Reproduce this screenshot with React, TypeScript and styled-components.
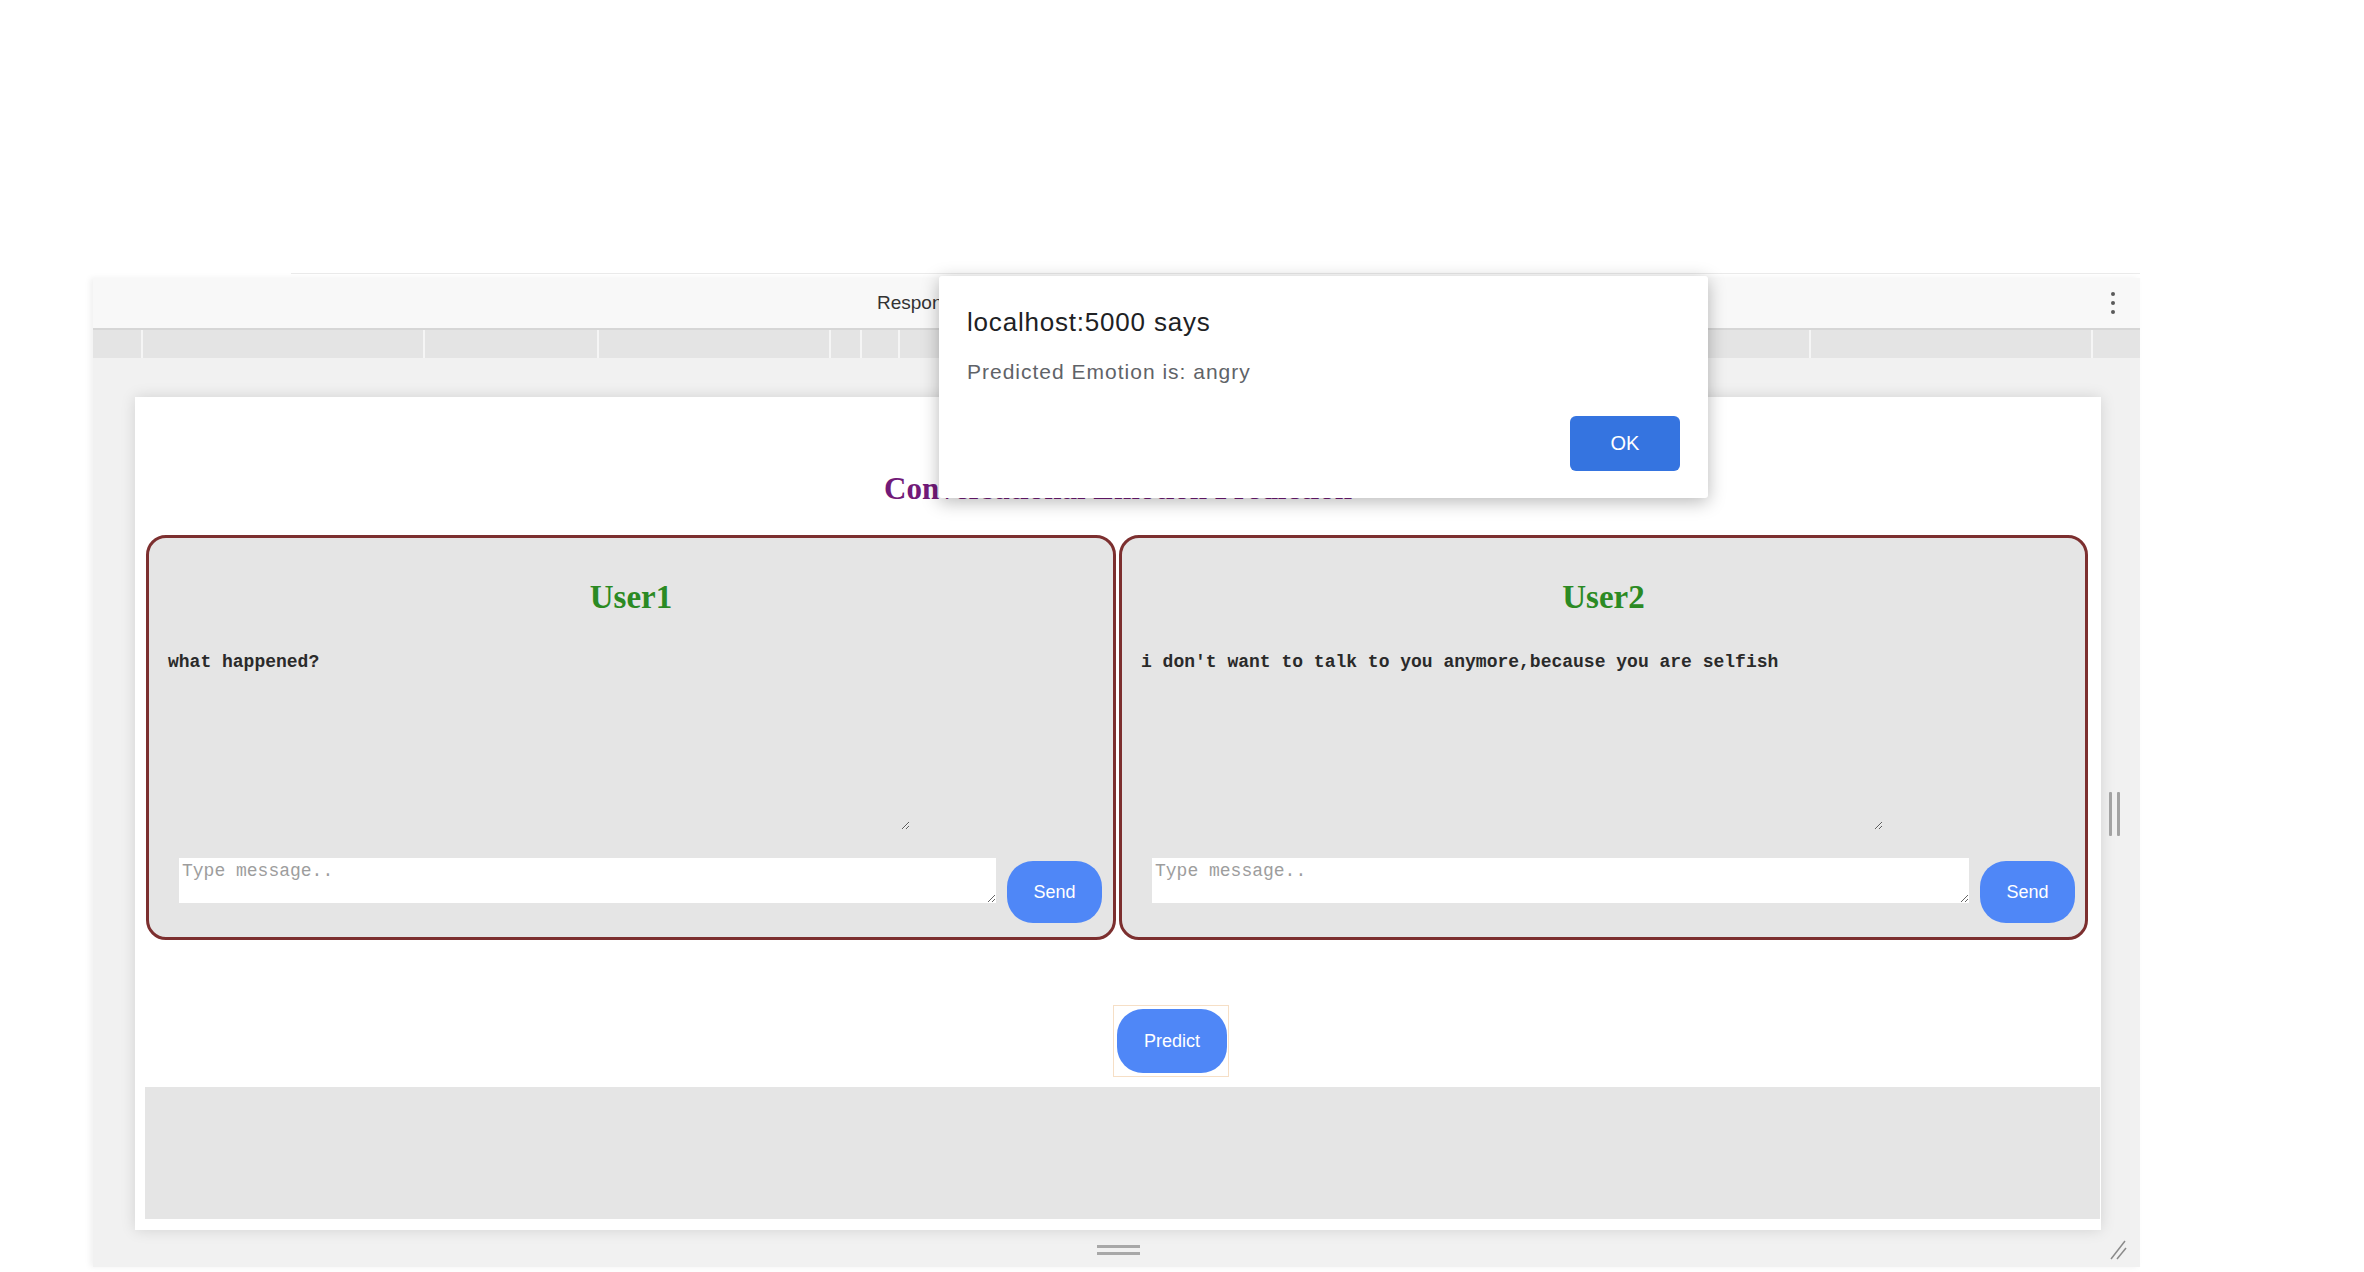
import React from "react";
import styled, { createGlobalStyle } from "styled-components";

const Global = createGlobalStyle`
  html, body { margin: 0; padding: 0; background: #ffffff; }
  body { width: 2364px; height: 1272px; overflow: hidden; font-family: "Liberation Sans", Arial, sans-serif; }
  * { box-sizing: border-box; }
`;

const Screen = styled.div`
  position: relative;
  width: 2364px;
  height: 1272px;
  background: #ffffff;
  display: flex;
  flex-direction: column;
`;

const TopRule = styled.div`
  margin: 273px 0 4px 291px;
  width: 1849px;
  height: 1px;
  background: #ebebeb;
`;

const DevTools = styled.div`
  margin-left: 93px;
  width: 2047px;
  height: 989px;
  display: flex;
  flex-direction: column;
  box-shadow: -3px 0 6px rgba(0, 0, 0, 0.06);
`;

const Toolbar = styled.div`
  height: 52px;
  background: #f8f8f8;
  border-bottom: 2px solid #d6d6d6;
  display: flex;
  align-items: center;
  justify-content: space-between;
  padding: 0 24px 0 784px;
`;

const ToolbarLabel = styled.span`
  font-family: "Liberation Sans", Arial, sans-serif;
  font-size: 19px;
  color: #333333;
`;

const Ruler = styled.div`
  height: 28px;
  background: #e4e4e4;
  display: flex;
`;

const RulerSegment = styled.div<{ $w: number; $last?: boolean }>`
  width: ${(p) => p.$w}px;
  height: 100%;
  border-right: ${(p) => (p.$last ? "none" : "2px solid #f5f5f5")};
`;

const Viewport = styled.div`
  flex: 1;
  background: #f1f1f1;
  display: flex;
  flex-direction: column;
  padding-top: 39px;
`;

const PageRow = styled.div`
  display: flex;
  padding-left: 42px;
`;

const Page = styled.div`
  width: 1966px;
  height: 833px;
  background: #ffffff;
  box-shadow: 0 0 14px rgba(0, 0, 0, 0.13);
  display: flex;
  flex-direction: column;
`;

const SideStrip = styled.div`
  width: 39px;
  display: flex;
  align-items: center;
  padding-left: 8px;
  gap: 5px;
`;

const VBar = styled.div`
  width: 3px;
  height: 44px;
  border-radius: 1px;
  background: #a3a3a3;
`;

const BottomRow = styled.div`
  display: flex;
  padding-left: 42px;
  height: 37px;
`;

const BottomStrip = styled.div`
  width: 1966px;
  display: flex;
  flex-direction: column;
  align-items: center;
  justify-content: center;
  gap: 4px;
  padding-top: 3px;
`;

const HBar = styled.div`
  width: 43px;
  height: 3px;
  background: #a8a8a8;
`;

const Corner = styled.div`
  width: 39px;
  display: flex;
  align-items: center;
  padding-left: 6px;
`;

const Heading = styled.h1`
  margin: 74px 0 28px;
  font-family: "Liberation Serif", "Times New Roman", serif;
  font-weight: bold;
  font-size: 31px;
  line-height: 36px;
  text-align: center;
  color: #721a78;
`;

const PanelsRow = styled.div`
  display: grid;
  grid-template-columns: 970px 969px;
  gap: 3px;
  padding-left: 11px;
`;

const Panel = styled.section`
  height: 405px;
  border: 3px solid #7c2f2f;
  border-radius: 20px;
  background: #e5e5e5;
  display: flex;
  flex-direction: column;
  padding-top: 40px;
`;

const UserTitle = styled.h2`
  margin: 0;
  font-family: "Liberation Serif", "Times New Roman", serif;
  font-weight: bold;
  font-size: 33px;
  line-height: 38px;
  text-align: center;
  color: #2b8a23;
`;

const MessageLog = styled.textarea`
  margin: 34px 0 0 17px;
  width: 744px;
  height: 180px;
  padding: 2px;
  border: none;
  outline: none;
  background: transparent;
  font-family: "Liberation Mono", "Courier New", monospace;
  font-weight: bold;
  font-size: 18px;
  line-height: 1.2;
  color: #2a2a2a;
`;

const InputRow = styled.div`
  display: flex;
  align-items: flex-start;
  gap: 11px;
  margin-top: 28px;
  padding-left: 30px;
`;

const MessageInput = styled.textarea`
  width: 817px;
  height: 45px;
  padding: 3px;
  border: none;
  outline: none;
  background: #ffffff;
  font-family: "Liberation Mono", "Courier New", monospace;
  font-size: 18px;
  line-height: 1.2;
  color: #222222;
  &::placeholder {
    color: #9d9d9d;
  }
`;

const PillButton = styled.button<{ $w: number; $h: number }>`
  width: ${(p) => p.$w}px;
  height: ${(p) => p.$h}px;
  border: none;
  border-radius: 26px;
  background: #4f87f7;
  color: #ffffff;
  font-family: "Liberation Sans", Arial, sans-serif;
  font-size: 18px;
  padding: 0;
  cursor: pointer;
`;

const SendButton = styled(PillButton)`
  margin-top: 3px;
`;

const PredictRow = styled.div`
  display: flex;
  justify-content: center;
  margin-top: 65px;
`;

const FocusRing = styled.div`
  margin-left: 106px;
  padding: 3px 1px 3px 3px;
  border: 1px solid #f6dfc6;
  display: flex;
`;

const Footer = styled.div`
  margin: 10px 0 0 10px;
  width: 1955px;
  height: 132px;
  background: #e5e5e5;
`;

const Dialog = styled.div`
  position: absolute;
  left: 939px;
  top: 276px;
  width: 769px;
  height: 222px;
  background: #ffffff;
  border-radius: 3px;
  box-shadow: 0 4px 18px rgba(0, 0, 0, 0.28);
  display: flex;
  flex-direction: column;
  padding: 31px 28px 27px 28px;
  font-family: "Liberation Sans", Arial, sans-serif;
`;

const DialogTitle = styled.div`
  font-size: 26px;
  line-height: 30px;
  letter-spacing: 0.8px;
  color: #202124;
`;

const DialogBody = styled.div`
  margin-top: 23px;
  font-size: 21px;
  line-height: 24px;
  letter-spacing: 1px;
  color: #5f6368;
`;

const OkButton = styled.button`
  margin-top: auto;
  align-self: flex-end;
  width: 110px;
  height: 55px;
  border: none;
  border-radius: 6px;
  background: #3574e0;
  color: #ffffff;
  font-family: "Liberation Sans", Arial, sans-serif;
  font-size: 20px;
  padding: 0;
`;

const rulerWidths = [50, 282, 174, 232, 31, 38, 436, 38, 31, 232, 174, 282, 47];

const Kebab = () => (
  <svg width="6" height="26" viewBox="0 0 6 26">
    <circle cx="3" cy="4" r="2" fill="#5a5a5a" />
    <circle cx="3" cy="13" r="2" fill="#5a5a5a" />
    <circle cx="3" cy="22" r="2" fill="#5a5a5a" />
  </svg>
);

const ResizeCorner = () => (
  <svg width="22" height="24" viewBox="0 0 22 24">
    <line x1="4" y1="22" x2="18" y2="4" stroke="#8a8a8a" strokeWidth="1.5" />
    <line x1="10" y1="22" x2="19" y2="11" stroke="#8a8a8a" strokeWidth="1.5" />
  </svg>
);

const users = [
  { name: "User1", log: "what happened?" },
  { name: "User2", log: "i don't want to talk to you anymore,because you are selfish" },
];

export default function App() {
  return (
    <>
      <Global />
      <Screen>
        <TopRule />
        <DevTools>
          <Toolbar>
            <ToolbarLabel>Responsive</ToolbarLabel>
            <Kebab />
          </Toolbar>
          <Ruler>
            {rulerWidths.map((w, i) => (
              <RulerSegment key={i} $w={w} $last={i === rulerWidths.length - 1} />
            ))}
          </Ruler>
          <Viewport>
            <PageRow>
              <Page>
                <Heading>Conversational Emotion Prediction</Heading>
                <PanelsRow>
                  {users.map((u) => (
                    <Panel key={u.name}>
                      <UserTitle>{u.name}</UserTitle>
                      <MessageLog readOnly defaultValue={u.log} />
                      <InputRow>
                        <MessageInput placeholder="Type message.." />
                        <SendButton $w={95} $h={62}>Send</SendButton>
                      </InputRow>
                    </Panel>
                  ))}
                </PanelsRow>
                <PredictRow>
                  <FocusRing>
                    <PillButton $w={110} $h={64}>Predict</PillButton>
                  </FocusRing>
                </PredictRow>
                <Footer />
              </Page>
              <SideStrip>
                <VBar />
                <VBar />
              </SideStrip>
            </PageRow>
            <BottomRow>
              <BottomStrip>
                <HBar />
                <HBar />
              </BottomStrip>
              <Corner>
                <ResizeCorner />
              </Corner>
            </BottomRow>
          </Viewport>
        </DevTools>
        <Dialog role="alertdialog">
          <DialogTitle>localhost:5000 says</DialogTitle>
          <DialogBody>Predicted Emotion is: angry</DialogBody>
          <OkButton>OK</OkButton>
        </Dialog>
      </Screen>
    </>
  );
}
